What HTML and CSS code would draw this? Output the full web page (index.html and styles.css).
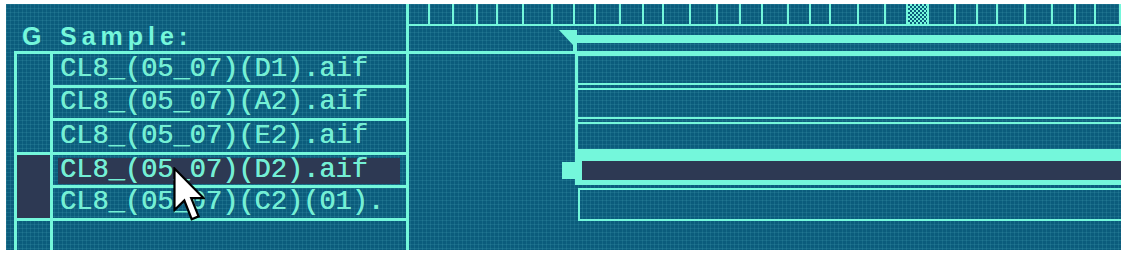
FILE: index.html
```html
<!DOCTYPE html>
<html lang="en">
<head>
    <meta charset="UTF-8">
    <meta name="viewport" content="width=device-width, initial-scale=1.0">
    <title>Sample Lanes</title>
    <link rel="stylesheet" href="styles.css">
</head>
<body>
    <div class="frame">
        <div class="left">
            <div class="title"><span class="title-key">G</span><span>Sample:</span></div>
            <div class="list">
                <div class="gutter">
                    <div class="gutter-top"></div>
                    <div class="gutter-sel"></div>
                </div>
                <div class="names">
                    <div class="name name-tall">CL8_(05_07)(D1).aif</div>
                    <div class="name">CL8_(05_07)(A2).aif</div>
                    <div class="name name-tall">CL8_(05_07)(E2).aif</div>
                    <div class="name name-sel"><span>CL8_(05_07)(D2).aif</span></div>
                    <div class="name">CL8_(05_07)(C2)(01).</div>
                </div>
            </div>
        </div>

        <div class="right">
            <div class="ruler">
                <div></div><div></div><div></div><div></div><div></div>
                <div></div><div></div><div></div><div></div><div></div>
                <div></div><div></div><div></div><div></div><div></div>
                <div></div><div></div><div></div><div></div><div></div>
                <div></div><div class="ruler-mark"></div><div></div><div></div><div></div>
                <div></div><div></div><div></div><div></div><div></div>
            </div>
            <div class="head">
                <svg class="marker" width="18" height="26" viewBox="0 0 18 26">
                    <polygon points="0,4 18,4 18,26 14,26 14,19" fill="#74f7db"/>
                </svg>
                <div class="head-bar"></div>
            </div>
            <div class="lanes">
                <div class="lane-group">
                    <div class="lane"></div>
                    <div class="lane"></div>
                    <div class="lane lane-short"></div>
                </div>
                <div class="lane-sel">
                    <div class="handle"></div>
                    <div class="sel-bar"><div class="sel-fill"></div></div>
                </div>
                <div class="lane lane-last"></div>
            </div>
        </div>

        <!-- mouse pointer over the list -->
        <svg class="cursor" width="32" height="58" viewBox="0 0 13 23.5">
            <polygon points="0.6,0.6 0.6,17.5 4.6,13.6 7.6,21.2 10.4,20 7.4,12.6 12.4,12.6" fill="#fff" stroke="#000" stroke-width="0.9" stroke-linejoin="miter"/>
        </svg>
    </div>
</body>
</html>
```

FILE: styles.css
```css
body {
    margin: 0;
    padding: 0;
    background: #fff;
}

.frame {
    position: relative;
    display: flex;
    width: 1115px;
    height: 246px;
    margin: 4px 0 0 6px;
    background-color: #0b5c7c;
    background-image:
        linear-gradient(rgba(120, 225, 235, 0.11) 1px, transparent 1px),
        linear-gradient(90deg, rgba(120, 225, 235, 0.11) 1px, transparent 1px);
    background-size: 4px 4px;
    overflow: hidden;
}

/* left panel */

.left {
    display: flex;
    flex-direction: column;
    width: 400px;
    border-right: 3px solid #74f7db;
}

.title {
    box-sizing: border-box;
    height: 47px;
    padding: 20px 0 0 16px;
    font-family: "Liberation Sans", Arial, sans-serif;
    font-weight: bold;
    font-size: 25px;
    line-height: 25px;
    letter-spacing: 5px;
    color: #74f7db;
    display: flex;
}

.title-key {
    width: 38px;
    letter-spacing: 0;
}

.list {
    flex: 1;
    display: flex;
    margin-left: 8px;
    border-top: 3px solid #74f7db;
    border-left: 3px solid #74f7db;
}

.gutter {
    width: 33px;
    border-right: 3px solid #74f7db;
}

.gutter-top {
    height: 98px;
}

.gutter-sel {
    height: 63px;
    background: #2d3953;
    border-top: 3px solid #74f7db;
    border-bottom: 3px solid #74f7db;
}

.names {
    flex: 1;
}

.name {
    box-sizing: border-box;
    height: 33px;
    padding-left: 7px;
    border-bottom: 3px solid #74f7db;
    font-family: "Liberation Mono", "Courier New", monospace;
    font-size: 27px;
    line-height: 29px;
    color: #74efd5;
    text-shadow: 0.4px 0 0 #74efd5;
    white-space: nowrap;
    overflow: hidden;
}

.name-tall {
    height: 34px;
    line-height: 30px;
}

.name-sel {
    padding: 3px 6px 1px 5px;
}

.name-sel span {
    display: block;
    height: 26px;
    padding-left: 2px;
    line-height: 24px;
    background: #2d3953;
}

/* right panel */

.right {
    flex: 1;
    display: flex;
    flex-direction: column;
}

.ruler {
    display: grid;
    grid-template-columns: 21px 24px 24px 20px 26px 29px 22px 21px 25px 23px 20px 27px 27px 23px 22px 26px 22px 20px 28px 27px 22px 21px 27px 22px 20px 28px 27px 23px 20px 25px;
    height: 20px;
    border-bottom: 2px solid #74f7db;
}

.ruler div {
    border-right: 2px solid #74f7db;
}

.ruler-mark {
    background-color: #0b5c7c;
    background-image:
        linear-gradient(45deg, #74f7db 25%, transparent 25%, transparent 75%, #74f7db 75%),
        linear-gradient(45deg, #74f7db 25%, transparent 25%, transparent 75%, #74f7db 75%);
    background-size: 4px 4px;
    background-position: 0 0, 2px 2px;
}

.head {
    box-sizing: border-box;
    display: flex;
    height: 28px;
    padding-left: 150px;
    border-bottom: 3px solid #74f7db;
}

.marker {
    display: block;
}

.head-bar {
    flex: 1;
    height: 8px;
    margin-top: 9px;
    background: #74f7db;
}

.lanes {
    display: flex;
    flex-direction: column;
}

.lane-group {
    margin-left: 166px;
    border-left: 3px solid #74f7db;
}

.lane {
    box-sizing: border-box;
    height: 31px;
    margin-bottom: 3px;
    border-top: 2px solid #74f7db;
    border-bottom: 2px solid #74f7db;
}

.lane-short {
    height: 29px;
    margin-bottom: 0;
}

.lane-sel {
    display: flex;
    height: 34px;
    margin-left: 153px;
}

.handle {
    width: 13px;
    height: 17px;
    margin-top: 11px;
    background: #74f7db;
}

.sel-bar {
    flex: 1;
    padding: 10px 0 5px 7px;
    background: #74f7db;
}

.sel-fill {
    height: 19px;
    background: #2d3953;
}

.lane-last {
    height: 33px;
    margin: 3px 0 0 169px;
    border-left: 2px solid #74f7db;
}

.cursor {
    position: absolute;
    left: 167px;
    top: 163px;
}
```
